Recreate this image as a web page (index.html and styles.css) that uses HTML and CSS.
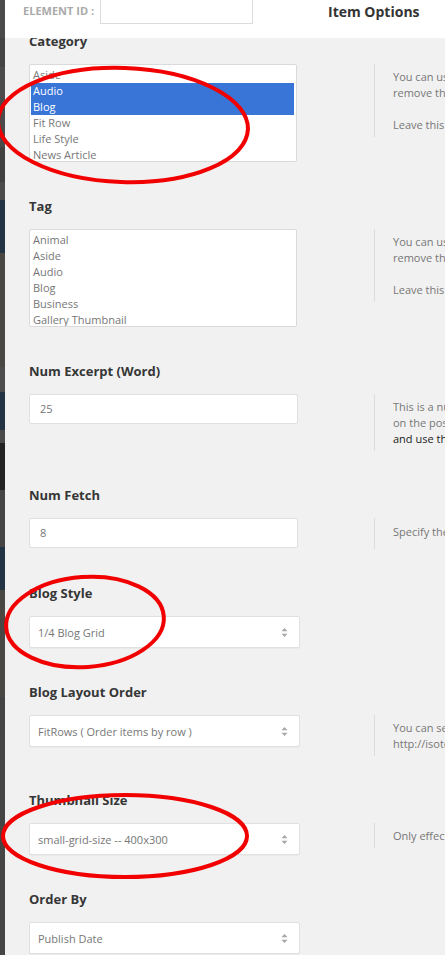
FILE: index.html
```html
<!DOCTYPE html>
<html lang="en">
<head>
<meta charset="utf-8">
<title>Item Options</title>
<link rel="stylesheet" href="styles.css">
</head>
<body>
<div class="page">
  <div class="backdrop-strip"></div>
  <div class="panel">
    <header class="panel-head">
      <span class="eid-label">ELEMENT ID :</span>
      <input class="eid-input" type="text" value="">
      <h2 class="head-title">Item Options</h2>
    </header>

    <div class="options">
      <section class="opt">
        <div class="opt-label">Category</div>
        <div class="opt-row">
          <div class="listbox">
            <div class="lb-item">Aside</div>
            <div class="lb-item is-selected">Audio</div>
            <div class="lb-item is-selected">Blog</div>
            <div class="lb-item">Fit Row</div>
            <div class="lb-item">Life Style</div>
            <div class="lb-item">News Article</div>
            <div class="lb-item">Photography</div>
          </div>
          <div class="opt-help">You can use Ctrl/Command button to select multiple categories or<br>remove the selected category.<br><br>Leave this field blank to select all categories.</div>
        </div>
      </section>

      <section class="opt">
        <div class="opt-label">Tag</div>
        <div class="opt-row">
          <div class="listbox">
            <div class="lb-item">Animal</div>
            <div class="lb-item">Aside</div>
            <div class="lb-item">Audio</div>
            <div class="lb-item">Blog</div>
            <div class="lb-item">Business</div>
            <div class="lb-item">Gallery Thumbnail</div>
            <div class="lb-item">Link</div>
          </div>
          <div class="opt-help">You can use Ctrl/Command button to select multiple tags or<br>remove the selected tags.<br><br>Leave this field blank to select all tags.</div>
        </div>
      </section>

      <section class="opt">
        <div class="opt-label">Num Excerpt (Word)</div>
        <div class="opt-row">
          <div class="text-field">25</div>
          <div class="opt-help">This is a number of word (decided by spaces) that you want to show<br>on the post excerpt. <span class="help-dark">Use 0 to hide the excerpt, -1 to show full posts</span><br><span class="help-dark">and use the wordpress 'more' tag</span></div>
        </div>
      </section>

      <section class="opt">
        <div class="opt-label">Num Fetch</div>
        <div class="opt-row">
          <div class="text-field">8</div>
          <div class="opt-help help-single">Specify the number of posts you want to pull out.</div>
        </div>
      </section>

      <section class="opt">
        <div class="opt-label">Blog Style</div>
        <div class="opt-row">
          <div class="select-field"><span>1/4 Blog Grid</span><svg class="sel-arrows" width="7" height="9" viewBox="0 0 7 9"><path d="M3.5 0 L6.5 3.3 H0.5 Z M3.5 9 L6.5 5.7 H0.5 Z" fill="#a7a7a7"/></svg></div>
          <div></div>
        </div>
      </section>

      <section class="opt">
        <div class="opt-label">Blog Layout Order</div>
        <div class="opt-row">
          <div class="select-field"><span>FitRows ( Order items by row )</span><svg class="sel-arrows" width="7" height="9" viewBox="0 0 7 9"><path d="M3.5 0 L6.5 3.3 H0.5 Z M3.5 9 L6.5 5.7 H0.5 Z" fill="#a7a7a7"/></svg></div>
          <div class="opt-help">You can see the difference between each layout type here<br>http://isotope.metafizzy.co/layout-modes.html</div>
        </div>
      </section>

      <section class="opt">
        <div class="opt-label">Thumbnail Size</div>
        <div class="opt-row">
          <div class="select-field"><span>small-grid-size -- 400x300</span><svg class="sel-arrows" width="7" height="9" viewBox="0 0 7 9"><path d="M3.5 0 L6.5 3.3 H0.5 Z M3.5 9 L6.5 5.7 H0.5 Z" fill="#a7a7a7"/></svg></div>
          <div class="opt-help">Only effects to standard and gallery post format</div>
        </div>
      </section>

      <section class="opt">
        <div class="opt-label">Order By</div>
        <div class="opt-row">
          <div class="select-field"><span>Publish Date</span><svg class="sel-arrows" width="7" height="9" viewBox="0 0 7 9"><path d="M3.5 0 L6.5 3.3 H0.5 Z M3.5 9 L6.5 5.7 H0.5 Z" fill="#a7a7a7"/></svg></div>
          <div></div>
        </div>
      </section>
    </div>
  </div>
</div>

<svg class="marks" width="445" height="955" viewBox="0 0 445 955">
  <ellipse cx="123" cy="125" rx="125" ry="57" transform="rotate(2 123 125)" />
  <ellipse cx="85" cy="622" rx="79" ry="45" transform="rotate(-4 85 622)" />
  <ellipse cx="125" cy="836" rx="122" ry="41" />
</svg>
</body>
</html>
```

FILE: styles.css
```css
* { box-sizing: border-box; }

html, body {
  margin: 0;
  padding: 0;
}

body {
  width: 445px;
  height: 955px;
  overflow: hidden;
  position: relative;
  background: #f1f1f1;
  font-family: "Open Sans", "Liberation Sans", sans-serif;
  color: #333;
}

.page {
  display: flex;
  height: 955px;
}

.backdrop-strip {
  width: 5px;
  flex: none;
  background: linear-gradient(to bottom,
    #4a4a4a 0, #4a4a4a 38px,
    #444 38px, #444 67px,
    #4b4b4b 67px, #4b4b4b 147px,
    #404040 147px, #404040 182px,
    #4b4b4b 182px, #4b4b4b 200px,
    #233444 200px, #233444 253px,
    #4a4843 253px, #4a4843 367px,
    #4d4d4d 367px, #4d4d4d 392px,
    #233444 392px, #233444 430px,
    #4a4a4a 430px, #4a4a4a 443px,
    #232323 443px, #232323 490px,
    #454545 490px, #454545 547px,
    #233444 547px, #233444 590px,
    #4a4843 590px, #4a4843 697px,
    #444 697px, #444 733px,
    #454545 733px, #454545 955px);
}

.panel {
  flex: 1;
  min-width: 0;
  display: flex;
  flex-direction: column;
}

/* header */
.panel-head {
  height: 38px;
  flex: none;
  background: #fff;
  display: grid;
  grid-template-columns: 77px 153px auto;
  align-items: start;
  padding-left: 18px;
  position: relative;
  z-index: 1;
}

.eid-label {
  margin-top: 4px;
  font-size: 11px;
  line-height: 14px;
  font-weight: 700;
  color: #aaa;
  white-space: nowrap;
}

.eid-input {
  margin: -1px 0 0;
  width: 153px;
  height: 25px;
  border: 1px solid #dcdcdc;
  background: #fff;
  border-radius: 0;
  padding: 0 6px;
  outline: none;
}

.head-title {
  margin: 3px 0 0 75px;
  font-size: 14px;
  line-height: 18px;
  font-weight: 700;
  color: #333;
  white-space: nowrap;
}

/* option list */
.options {
  flex: 1;
  overflow: hidden;
  padding-left: 24px;
}

.opt {
  margin-bottom: 35px;
}

.opt:first-child {
  margin-top: -6px;
}

.opt-label {
  font-size: 13px;
  line-height: 18px;
  font-weight: 700;
  color: #363636;
  margin-bottom: 14px;
  white-space: nowrap;
}

.opt-row {
  display: grid;
  grid-template-columns: 345px 1fr;
  align-items: start;
}

.listbox {
  width: 268px;
  height: 98px;
  background: #fff;
  border: 1px solid #dadada;
  border-radius: 2px;
  padding: 2px 2px 0 1px;
  overflow: hidden;
}

.lb-item {
  height: 16px;
  font-size: 11px;
  line-height: 16px;
  padding-left: 2px;
  color: #777;
  white-space: nowrap;
}

.lb-item.is-selected {
  background: #3875d7;
  color: #fff;
}

.text-field {
  width: 269px;
  height: 30px;
  background: #fff;
  border: 1px solid #e0e0e0;
  border-radius: 2px;
  padding-left: 10px;
  font-size: 11px;
  line-height: 28px;
  color: #777;
}

.select-field {
  width: 271px;
  height: 32px;
  background: #fff;
  border: 1px solid #e0e0e0;
  border-radius: 2px;
  box-shadow: 0 1px 1px rgba(0, 0, 0, 0.03);
  padding: 0 11px 0 8px;
  display: flex;
  align-items: center;
  justify-content: space-between;
  font-size: 11px;
  color: #777;
  white-space: nowrap;
}

.sel-arrows {
  flex: none;
  display: block;
}

.opt-help {
  border-left: 1px solid #dcdcdc;
  padding: 5px 0 4px 18px;
  font-size: 11px;
  line-height: 16px;
  color: #777;
  white-space: nowrap;
}

.opt-help.help-single {
  padding-top: 6px;
  padding-bottom: 9px;
}

.help-dark {
  color: #222;
}

/* annotation marks drawn over the screenshot */
.marks {
  position: absolute;
  top: 0;
  left: 0;
  pointer-events: none;
  z-index: 5;
}

.marks ellipse {
  fill: none;
  stroke: #f20000;
  stroke-width: 4;
}
```
